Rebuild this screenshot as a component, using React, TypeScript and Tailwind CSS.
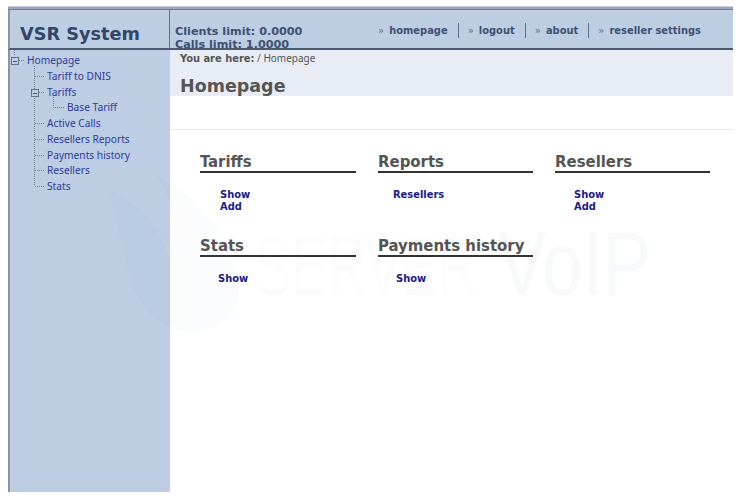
const font = "font-['DejaVu_Sans',sans-serif]";
const cond = "font-['DejaVu_Sans',sans-serif] [font-stretch:condensed]";
const tree = "font-['Noto_Sans',sans-serif]";

function Tree() {
  const items: [string, number][] = [
    ['Homepage', 27], ['Tariff to DNIS', 47], ['Tariffs', 47], ['Base Tariff', 67], ['Active Calls', 47],
    ['Resellers Reports', 47], ['Payments history', 47], ['Resellers', 47], ['Stats', 47],
  ];
  return (
    <div className={`relative pt-[3px] text-[10.2px] leading-[15.75px] text-[#2d3a9c] ${tree}`}>
      <svg className="absolute left-0 top-0" width="70" height="150" fill="none" stroke="#6f7f95" strokeWidth="1">
        <g strokeDasharray="1 1">
          <path d="M4.5 0v6" />
          <path d="M9 10.5h6" />
          <path d="M24.5 16V136" />
          <path d="M25 26.5h10M29 42.5h6M25 73.5h10M25 89.5h10M25 105.5h10M25 120.5h10M25 136.5h10" />
          <path d="M43.5 47v10.5h11" />
        </g>
        <rect x="1.5" y="7.5" width="7" height="7" fill="#bccde4" stroke="#68717f" />
        <path d="M3 11.5h4" stroke="#555" />
        <rect x="21.5" y="39.5" width="7" height="7" fill="#bccde4" stroke="#68717f" />
        <path d="M23 43.5h4" stroke="#555" />
      </svg>
      {items.map(([label, left]) => (
        <div key={label} style={{ paddingLeft: left - 10 }} className="relative whitespace-nowrap">{label}</div>
      ))}
    </div>
  );
}

function Section({ title, links, indent }: { title: string; links: string[]; indent: string }) {
  return (
    <div className="h-[84px]">
      <h2 className={`h-[24px] whitespace-nowrap border-b-2 border-[#333] pt-[3px] text-[16.6px] leading-[19px] font-bold text-[#555] ${cond}`}>{title}</h2>
      <div className={`mt-[15.5px] text-[11px] leading-[12.5px] font-bold text-[#1a1a8c] ${cond} ${indent}`}>
        {links.map((l) => <div key={l}>{l}</div>)}
      </div>
    </div>
  );
}

function Sep() {
  return <span className="mr-[9px] ml-[10px] inline-block h-[15px] w-px bg-[#5b7391]" />;
}

function Nav({ label }: { label: string }) {
  return <span className="whitespace-nowrap"><span className="mr-[2px] font-normal text-[#5a7090]">» </span>{label}</span>;
}

export default function App() {
  return (
    <div className="relative h-[500px] w-[742px] overflow-hidden bg-white pt-[6px] pr-[9px] pb-[8px] pl-[8px]">
      <div className="flex h-full flex-col border-t border-[#c9cde2]">
        <div className="h-[3px] border-b border-[#767c90] bg-[#9ea3b8]" />
        <div className="flex h-[40px] border-b-2 border-l-2 border-[#4a5a70] border-l-[#8a93a2] bg-[#bdcde2]">
          <div className={`w-[160px] shrink-0 border-r border-[#5c6f8a] pt-[11px] pl-[10px] text-[17.7px] leading-[26px] font-bold text-[#32466b] ${font}`}>VSR System</div>
          <div className={`w-[208px] shrink-0 overflow-hidden pt-[15px] pl-[5px] text-[11.2px] leading-[13px] font-bold text-[#3d5173] ${font}`}>
            <div>Clients limit: 0.0000</div>
            <div>Calls limit: 1.0000</div>
          </div>
          <div className={`flex items-start pt-[13px] text-[11px] leading-[15px] font-bold text-[#3d5173] ${cond}`}>
            <Nav label="homepage" /><Sep /><Nav label="logout" /><Sep /><Nav label="about" /><Sep /><Nav label="reseller settings" />
          </div>
        </div>
        <div className="flex flex-1">
          <aside className="w-[162px] shrink-0 border-l-2 border-[#8a93a2] bg-[#bccde4]">
            <Tree />
          </aside>
          <main className="relative flex-1 bg-white">
            <div className={`h-[46px] bg-[#e8ecf5] pl-[10px] text-[#555] ${tree}`}>
              <div className="text-[10px] leading-[17px]"><b className={`${cond} text-[11px]`}>You are here:</b> / Homepage</div>
              <div className={`mt-[8px] text-[17.5px] leading-[22px] font-bold ${font}`}>Homepage</div>
            </div>
            <div className="h-[34px] border-b border-[#e8e8e8]" />
            <div className="grid grid-cols-[156px_155px_155px] gap-x-[22px] pt-[19px] pl-[30px]">
              <Section title="Tariffs" links={['Show', 'Add']} indent="pl-[20px]" />
              <Section title="Reports" links={['Resellers']} indent="pl-[15px]" />
              <Section title="Resellers" links={['Show', 'Add']} indent="pl-[19px]" />
              <Section title="Stats" links={['Show']} indent="pl-[18px]" />
              <Section title="Payments history" links={['Show']} indent="pl-[18px]" />
            </div>
          </main>
        </div>
      </div>
      <svg className="pointer-events-none absolute top-[170px] left-[100px]" width="560" height="160" viewBox="0 0 560 160">
        <path d="M10 20c25 10 50 35 60 70 8-30 5-60-15-85 45 20 70 55 80 95 10 30 0 45-15 55-40 15-75 0-90-45C22 80 15 50 10 20z" fill="#5878b0" opacity="0.022" />
        <text x="155" y="125" fill="#5878b0" opacity="0.014" fontFamily="Liberation Sans" fontSize="84" textLength="222" lengthAdjust="spacingAndGlyphs">SERVER</text>
        <text x="398" y="125" fill="#5878b0" opacity="0.04" fontFamily="Liberation Sans" fontSize="90" textLength="153" lengthAdjust="spacingAndGlyphs">VoIP</text>
      </svg>
    </div>
  );
}
